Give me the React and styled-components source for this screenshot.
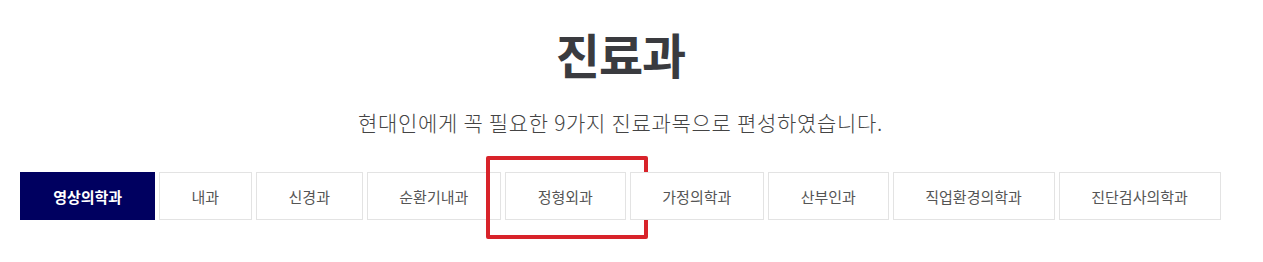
import React from 'react';
import styled, { createGlobalStyle } from 'styled-components';

const GlobalStyle = createGlobalStyle`
    html, body {
        margin: 0;
        padding: 0;
        background: #ffffff;
    }
    body {
        font-family: "Noto Sans CJK KR", "Noto Sans", sans-serif;
    }
`

const departments = [
    '영상의학과',
    '내과',
    '신경과',
    '순환기내과',
    '정형외과',
    '가정의학과',
    '산부인과',
    '직업환경의학과',
    '진단검사의학과',
];

function App() {
    const active = 0;
    const marked = 4;

    return (
        <>
            <GlobalStyle />
            <Section>
                <Title>진료과</Title>
                <Subtitle>현대인에게 꼭 필요한 9가지 진료과목으로 편성하였습니다.</Subtitle>
                <TabList>
                    {departments.map((name, idx) => (
                        <Tab key={idx} active={idx === active}>
                            {name}
                            {idx === marked ? <Highlight /> : null}
                        </Tab>
                    ))}
                </TabList>
            </Section>
        </>
    );
}

const Section = styled.section`
    width: 1241px;
    height: 262px;
    padding-top: 18px;
    box-sizing: border-box;
    display: flex;
    flex-direction: column;
    align-items: center;
`
const Title = styled.h2`
    margin: 0;
    font-size: 48px;
    line-height: 70px;
    font-weight: 700;
    color: #3a3b3f;
    letter-spacing: -1px;
`
const Subtitle = styled.p`
    margin: 19px 0 0;
    font-size: 21px;
    line-height: 30px;
    font-weight: 300;
    color: #444444;
    letter-spacing: 0.7px;
`
const TabList = styled.ul`
    list-style: none;
    margin: 35px 0 0;
    padding: 0;
    display: flex;
    gap: 4px;
`
const Tab = styled.li.withConfig({ shouldForwardProp: (p) => p !== 'active' })`
    position: relative;
    box-sizing: border-box;
    height: 48px;
    padding: 0 31.7px;
    display: flex;
    align-items: center;
    justify-content: center;
    border: 1px solid ${(p) => (p.active ? '#000060' : '#e3e3e3')};
    background: ${(p) => (p.active ? '#000060' : '#ffffff')};
    color: ${(p) => (p.active ? '#ffffff' : '#555555')};
    font-size: 15px;
    font-weight: ${(p) => (p.active ? 700 : 400)};
    white-space: nowrap;
    cursor: pointer;
`
const Highlight = styled.span`
    position: absolute;
    left: -20px;
    right: -23px;
    top: -17px;
    bottom: -20px;
    border: 4px solid #d8232a;
    border-radius: 2px;
    pointer-events: none;
`

export default App;
